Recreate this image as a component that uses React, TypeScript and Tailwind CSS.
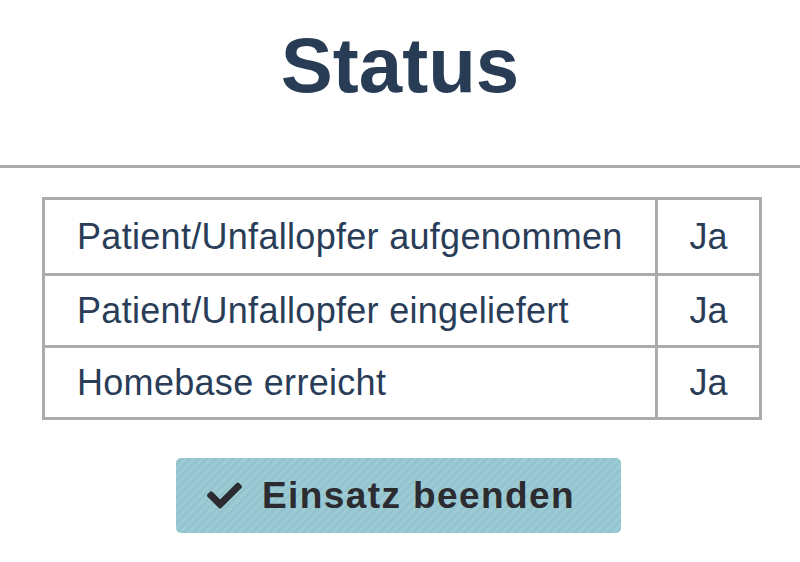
import { FaCheck } from "react-icons/fa";

const rows = [
  { label: "Patient/Unfallopfer aufgenommen", value: "Ja", h: "h-[73px]" },
  { label: "Patient/Unfallopfer eingeliefert", value: "Ja", h: "h-[72px]" },
  { label: "Homebase erreicht", value: "Ja", h: "h-[72px]" },
];

export default function App() {
  return (
    <div className="w-[800px] h-[562px] bg-white font-['Liberation_Sans',Arial,sans-serif] overflow-hidden">
      {/* Title */}
      <h1 className="pt-[26px] text-center text-[78px] leading-none font-bold text-[#283d55]">
        Status
      </h1>

      <hr className="mt-[61px] border-0 h-[3px] bg-[#ababab]" />

      {/* Status table */}
      <div className="mt-[29px] ml-[42px] w-[720px] border-[3px] border-[#ababab]">
        {rows.map((row, i) => (
          <div
            key={row.label}
            className={`grid grid-cols-[1fr_101px] ${row.h} ${i > 0 ? "border-t-[3px] border-[#ababab]" : ""}`}
          >
            <div className="flex items-center pl-[32px] border-r-[3px] border-[#ababab] text-[36px] tracking-[0.3px] text-[#2a3d58]">
              {row.label}
            </div>
            <div className="flex items-center justify-center text-[36px] text-[#2a3d58]">
              {row.value}
            </div>
          </div>
        ))}
      </div>

      {/* Finish button */}
      <div className="mt-[38px] flex justify-center">
        <button className="ml-[-3px] w-[445px] h-[75px] flex items-center gap-[20px] pl-[31px] rounded-[5px] bg-[repeating-linear-gradient(135deg,#9dcbd5_0px,#9dcbd5_3px,#94c4ce_3px,#94c4ce_6px)] text-[37px] font-bold tracking-[1.4px] text-[#2b2b30]">
          <FaCheck className="w-[35px] h-[35px] text-[#2b2b30]" />
          <span>Einsatz beenden</span>
        </button>
      </div>
    </div>
  );
}
